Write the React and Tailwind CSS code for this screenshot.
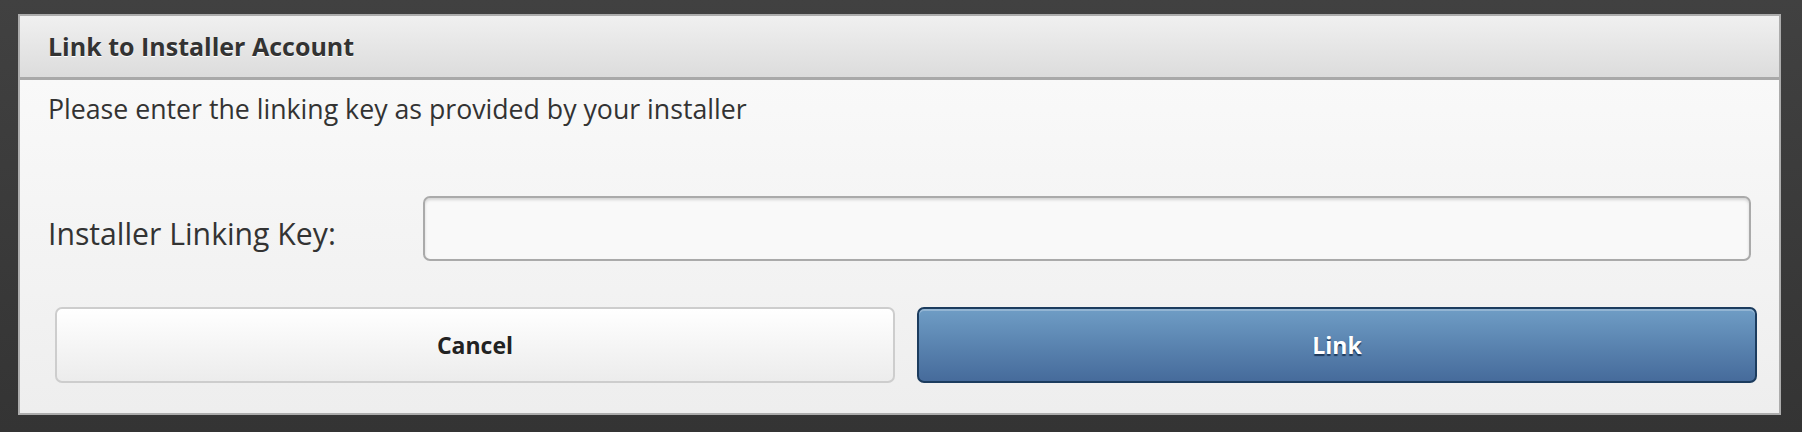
export default function App() {
  return (
    <div className="w-[1802px] h-[432px] bg-gradient-to-b from-[#414141] to-[#343434] pt-[14px] pl-[18px] pr-[21px] pb-[17px]" style={{ fontFamily: '"Open Sans", "Noto Sans", sans-serif' }}>
      <div className="h-[401px] border-2 border-[#acacac] flex flex-col">
        <div className="h-[61px] shrink-0 flex items-center pl-[28px] bg-gradient-to-b from-[#f0f0f0] to-[#dcdcdc] border-b-[3px] border-[#a9a9a9] box-content">
          <span className="text-[25px] font-bold text-[#333] [text-shadow:0_1px_0_#ffffff] leading-[33px]">Link to Installer Account</span>
        </div>
        <div className="flex-1 bg-gradient-to-b from-[#f9f9f9] to-[#eeeeee] pt-[11px] pb-[30px]">
          <p className="px-[28px] text-[26.7px] leading-[35px] text-[#333]">Please enter the linking key as provided by your installer</p>
          <div className="flex items-start mt-[70px] pl-[28px] pr-[28px]">
            <label className="w-[375px] shrink-0 pt-[17px] text-[30.2px] leading-[41px] text-[#333]">Installer Linking Key:</label>
            <input type="text" className="flex-1 h-[65px] rounded-[7px] border-2 border-[#aaaaaa] bg-[#f9f9f9] shadow-[inset_0_2px_3px_rgba(0,0,0,0.15)] outline-none" />
          </div>
          <div className="flex gap-[22px] mt-[46px] ml-[35px] mr-[22px]">
            <button className="flex-1 h-[76px] rounded-[7px] border-2 border-[#cdcdcd] bg-gradient-to-b from-[#ffffff] to-[#ececec] text-[23px] font-bold text-[#222]">Cancel</button>
            <button className="flex-1 h-[76px] rounded-[7px] border-2 border-[#1c3c5e] bg-gradient-to-b from-[#6f9dc5] to-[#466b9b] shadow-[inset_0_2px_0_rgba(255,255,255,0.25)] text-[23px] font-bold text-white [text-shadow:0_2px_1px_#1e3a5c]">Link</button>
          </div>
        </div>
      </div>
    </div>
  );
}
